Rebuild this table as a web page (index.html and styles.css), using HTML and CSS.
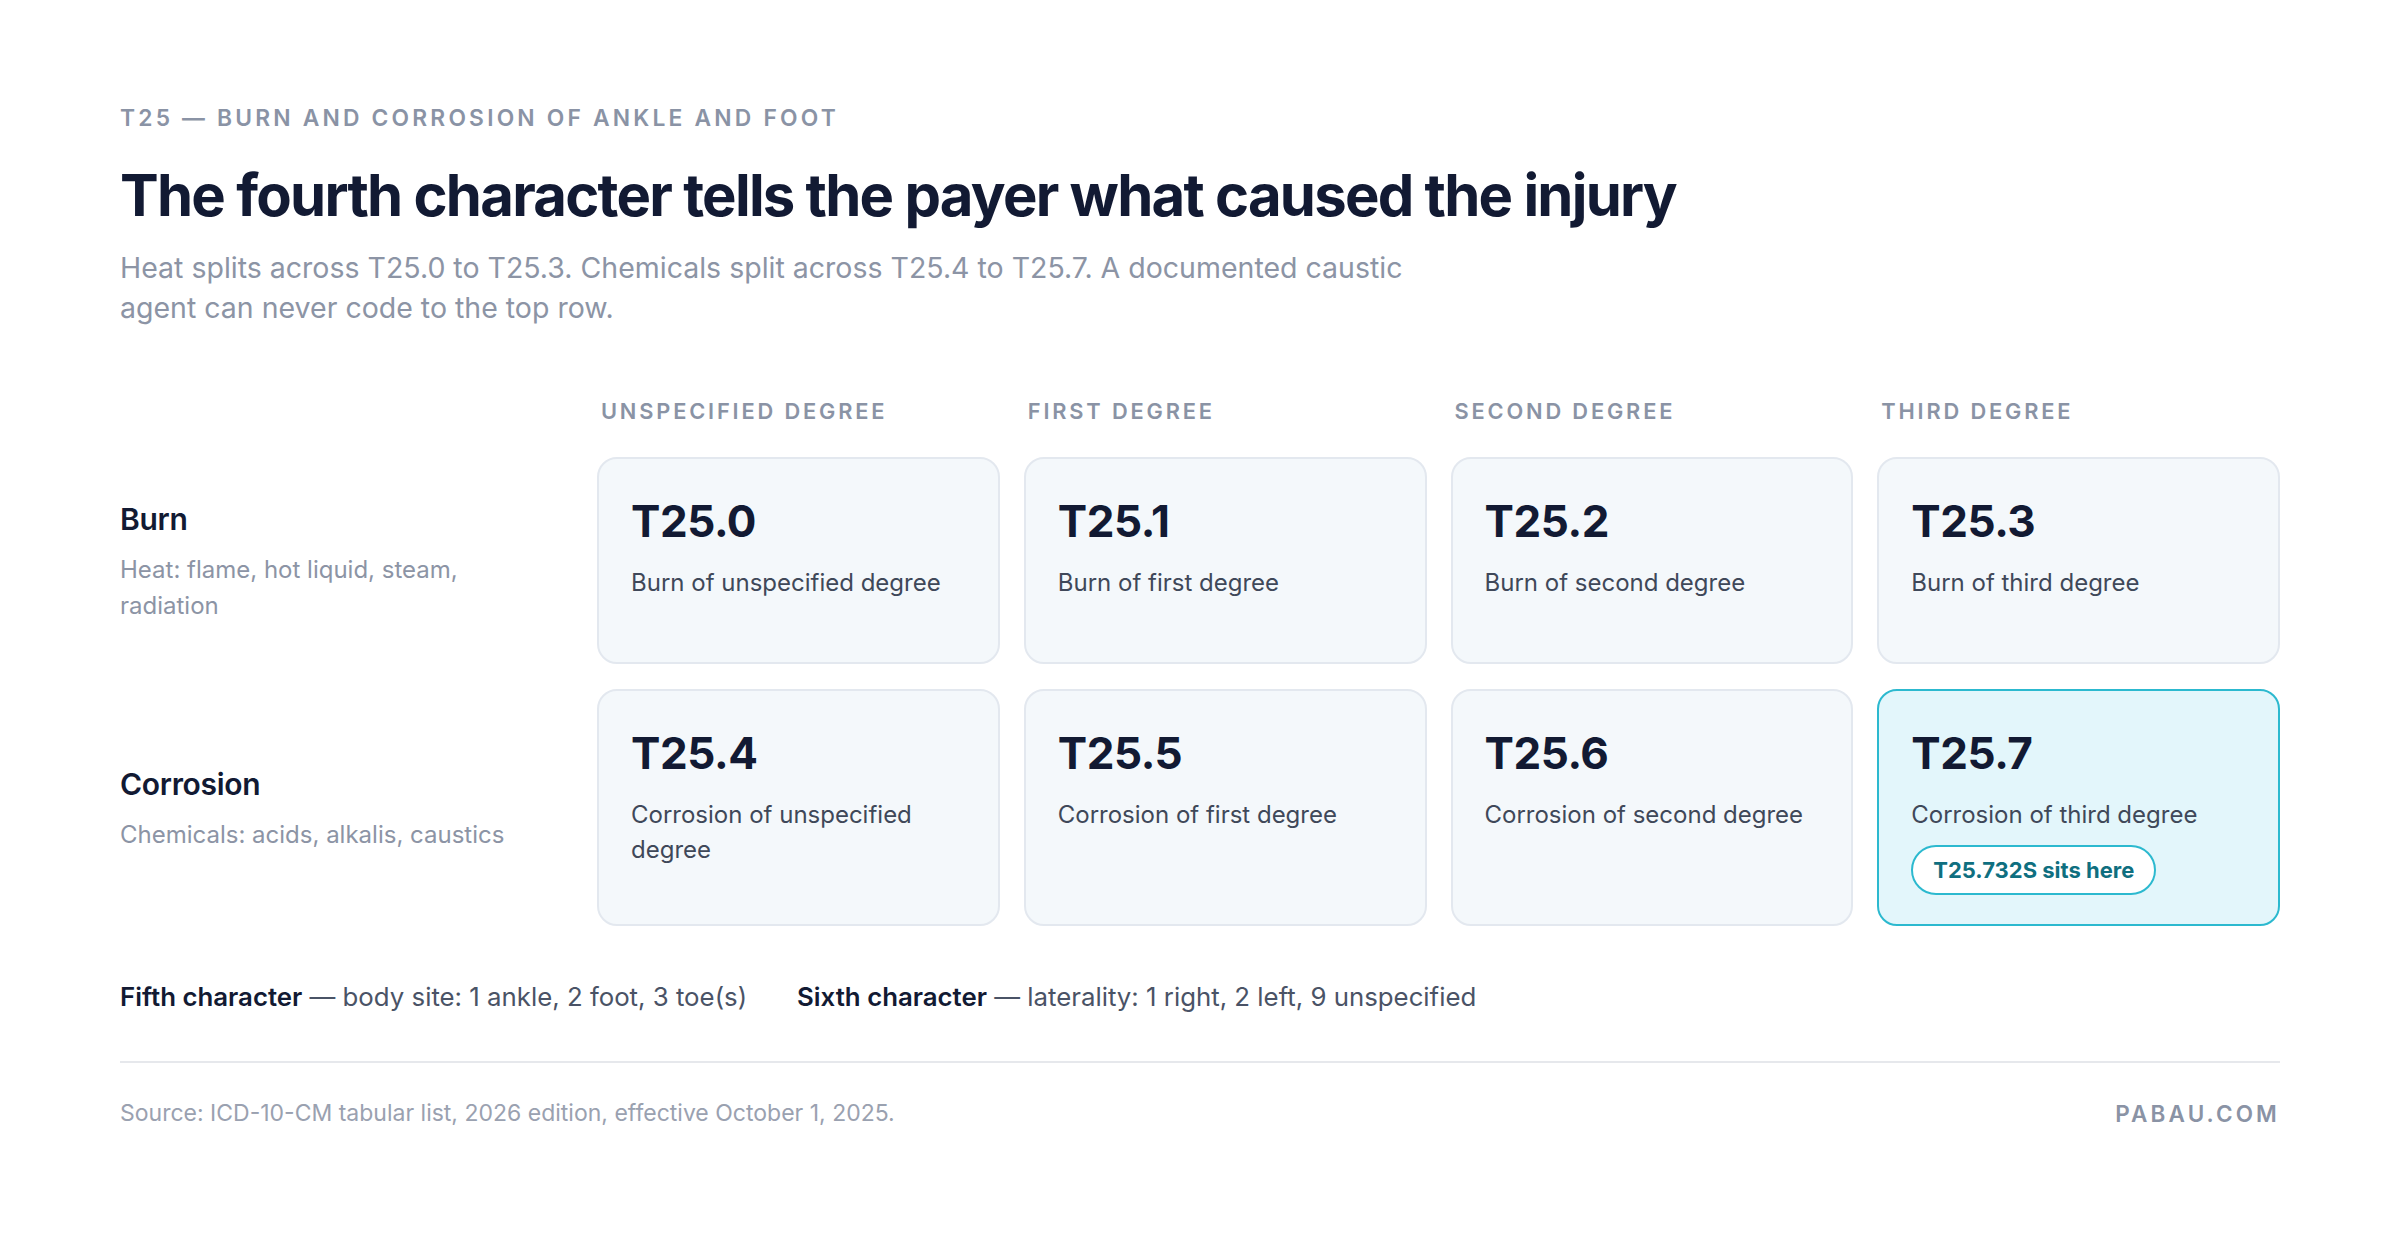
FILE: index.html
```html
<!DOCTYPE html>
<html lang="en">
<head>
<meta charset="utf-8">
<title>T25 — Burn and corrosion of ankle and foot</title>
<link rel="stylesheet" href="styles.css">
</head>
<body>
<main class="page">
  <header class="head">
    <div class="eyebrow">T25 — Burn and corrosion of ankle and foot</div>
    <h1 class="title">The fourth character tells the payer what caused the injury</h1>
    <p class="lede">Heat splits across T25.0 to T25.3. Chemicals split across T25.4 to T25.7. A documented caustic agent can never code to the top row.</p>
  </header>

  <section class="matrix">
    <div class="corner"></div>
    <div class="colhead">Unspecified degree</div>
    <div class="colhead">First degree</div>
    <div class="colhead">Second degree</div>
    <div class="colhead">Third degree</div>

    <div class="rowlabel">
      <div class="rowname">Burn</div>
      <div class="rowsub">Heat: flame, hot liquid, steam, radiation</div>
    </div>
    <div class="card"><div class="code">T25.0</div><div class="desc">Burn of unspecified degree</div></div>
    <div class="card"><div class="code">T25.1</div><div class="desc">Burn of first degree</div></div>
    <div class="card"><div class="code">T25.2</div><div class="desc">Burn of second degree</div></div>
    <div class="card"><div class="code">T25.3</div><div class="desc">Burn of third degree</div></div>

    <div class="rowlabel">
      <div class="rowname">Corrosion</div>
      <div class="rowsub">Chemicals: acids, alkalis, caustics</div>
    </div>
    <div class="card"><div class="code">T25.4</div><div class="desc">Corrosion of unspecified degree</div></div>
    <div class="card"><div class="code">T25.5</div><div class="desc">Corrosion of first degree</div></div>
    <div class="card"><div class="code">T25.6</div><div class="desc">Corrosion of second degree</div></div>
    <div class="card card-hl"><div class="code">T25.7</div><div class="desc">Corrosion of third degree</div><span class="pill">T25.732S sits here</span></div>
  </section>

  <div class="notes">
    <span class="note"><b>Fifth character</b> — body site: 1 ankle, 2 foot, 3 toe(s)</span>
    <span class="note"><b>Sixth character</b> — laterality: 1 right, 2 left, 9 unspecified</span>
  </div>

  <footer class="foot">
    <span class="source">Source: ICD-10-CM tabular list, 2026 edition, effective October 1, 2025.</span>
    <span class="brand">PABAU.COM</span>
  </footer>
</main>
</body>
</html>
```
FILE: styles.css
```css
* { box-sizing: border-box; }
html, body { margin: 0; padding: 0; background: #ffffff; }
body {
  font-family: Inter, "Noto Sans", "Liberation Sans", sans-serif;
  color: #121a33;
}
.page {
  width: 2400px;
  padding: 104px 120px 0 120px;
}
.eyebrow {
  font-size: 22.8px;
  font-weight: 600;
  letter-spacing: 0.14em;
  text-transform: uppercase;
  color: #8a93a5;
  line-height: 28px;
}
.title {
  margin: 26px 0 0 0;
  font-size: 58px;
  line-height: 74px;
  font-weight: 700;
  letter-spacing: -0.03em;
  color: #121a33;
}
.lede {
  margin: 16px 0 0 0;
  max-width: 1320px;
  font-size: 28.5px;
  line-height: 40px;
  color: #8c94a5;
  font-weight: 400;
}
.matrix {
  margin-top: 69px;
  display: grid;
  grid-template-columns: 453px repeat(4, 1fr);
  grid-template-rows: auto 207px 237px;
  column-gap: 24px;
  row-gap: 25px;
}
.colhead {
  font-size: 21.8px;
  font-weight: 600;
  letter-spacing: 0.13em;
  text-transform: uppercase;
  color: #8a93a5;
  line-height: 28px;
  padding-left: 4px;
  margin-bottom: 7px;
}
.rowlabel {
  display: flex;
  flex-direction: column;
  justify-content: center;
  padding-top: 4px;
}
.rowname {
  font-size: 30px;
  font-weight: 600;
  color: #121a33;
  line-height: 36px;
  letter-spacing: -0.01em;
}
.rowsub {
  margin-top: 15px;
  font-size: 24px;
  line-height: 36px;
  color: #8c94a5;
  max-width: 400px;
}
.card {
  background: #f4f8fb;
  border: 2px solid #e3e8ef;
  border-radius: 20px;
  padding: 34px 32px 24px 32px;
  display: flex;
  flex-direction: column;
  align-items: flex-start;
}
.card-hl {
  background: #e3f6fb;
  border-color: #2cb9cf;
}
.code {
  font-size: 44px;
  font-weight: 700;
  line-height: 56px;
  color: #121a33;
  letter-spacing: -0.01em;
}
.desc {
  margin-top: 16px;
  font-size: 24px;
  line-height: 35px;
  color: #3f4859;
}
.pill {
  margin-top: 13px;
  display: inline-flex;
  align-items: center;
  height: 50px;
  padding: 0 20px;
  border: 2px solid #2cb9cf;
  border-radius: 999px;
  background: #ffffff;
  color: #0f6f80;
  font-size: 22px;
  font-weight: 700;
}
.notes {
  margin-top: 53px;
  display: flex;
  gap: 50px;
  font-size: 25.8px;
  line-height: 36px;
  color: #4a5366;
}
.notes b {
  font-weight: 600;
  color: #121a33;
}
.foot {
  margin-top: 46px;
  border-top: 2px solid #e6e8ec;
  padding-top: 35px;
  display: flex;
  justify-content: space-between;
  align-items: center;
}
.source {
  font-size: 23px;
  color: #9aa1b0;
  line-height: 30px;
}
.brand {
  font-size: 22.5px;
  font-weight: 600;
  letter-spacing: 0.14em;
  color: #8a93a5;
}
```
